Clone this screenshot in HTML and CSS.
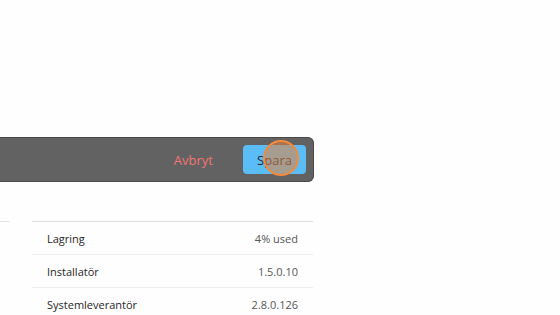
FILE: index.html
```html
<!DOCTYPE html>
<html lang="sv">
<head>
    <meta charset="UTF-8">
    <title>Inställningar</title>
    <link rel="stylesheet" href="styles.css">
</head>
<body>

<div class="page">
    <div class="toolbar">
        <button class="btn-cancel">Avbryt</button>
        <button class="btn-save">Spara<span class="touch"></span></button>
    </div>

    <div class="lists">
        <div class="stub"></div>
        <div class="info">
            <div class="row">
                <span>Lagring</span>
                <span class="value">4% used</span>
            </div>
            <div class="row">
                <span>Installatör</span>
                <span class="value">1.5.0.10</span>
            </div>
            <div class="row">
                <span>Systemleverantör</span>
                <span class="value">2.8.0.126</span>
            </div>
        </div>
    </div>
</div>

</body>
</html>
```

FILE: styles.css
```css
body {
    margin: 0;
    background-color: #fefefe;
    font-family: 'Open Sans', 'Noto Sans', sans-serif;
    color: #262626;
}

.page {
    padding-top: 137px;
}

.toolbar {
    width: 314px;
    height: 45px;
    box-sizing: border-box;
    background-color: #626262;
    border: 1px solid #4a4a4a;
    border-left: none;
    border-radius: 0 6px 6px 0;
    display: flex;
    align-items: center;
    justify-content: flex-end;
    padding-right: 7px;
    gap: 30px;
}

.btn-cancel {
    background: none;
    border: none;
    font-family: inherit;
    font-size: 13px;
    color: #f27474;
    padding: 0;
}

.btn-save {
    position: relative;
    width: 63px;
    height: 29px;
    background-color: #5bbdf6;
    border: none;
    border-radius: 4px;
    font-family: inherit;
    font-size: 13px;
    color: #1c2a36;
    padding: 0;
}

/* отпечаток нажатия */
.touch {
    position: absolute;
    left: 20px;
    top: -5px;
    width: 36px;
    height: 36px;
    border-radius: 50%;
    background-color: rgba(230, 130, 60, 0.55);
    border: 2px solid #f08a3c;
    box-sizing: border-box;
}

.lists {
    display: flex;
    align-items: flex-start;
    margin-top: 39px;
}

.stub {
    width: 9px;
    height: 1px;
    background-color: #e2e2e2;
}

.info {
    width: 281px;
    margin-left: 23px;
    border-top: 1px solid #dddddd;
}

.row {
    display: flex;
    justify-content: space-between;
    align-items: center;
    height: 32px;
    padding: 0 15px;
    font-size: 11px;
    border-bottom: 1px solid #ededed;
}

.value {
    color: #555555;
}
```
